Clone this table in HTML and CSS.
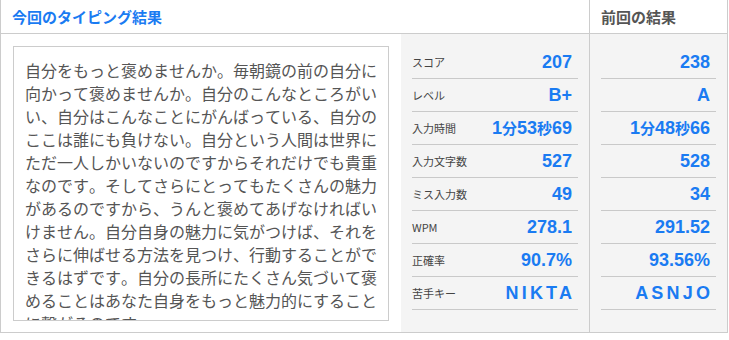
FILE: index.html
```html
<!DOCTYPE html>
<html lang="ja">
<head>
<meta charset="utf-8">
<title>タイピング結果</title>
<link rel="stylesheet" href="styles.css">
</head>
<body>
<div class="board">
  <div class="head head-cur">今回のタイピング結果</div>
  <div class="head head-prev">前回の結果</div>
  <div class="body-cur">
    <div class="passage">自分をもっと褒めませんか。毎朝鏡の前の自分に向かって褒めませんか。自分のこんなところがいい、自分はこんなことにがんばっている、自分のここは誰にも負けない。自分という人間は世界にただ一人しかいないのですからそれだけでも貴重なのです。そしてさらにとってもたくさんの魅力があるのですから、うんと褒めてあげなければいけません。自分自身の魅力に気がつけば、それをさらに伸ばせる方法を見つけ、行動することができるはずです。自分の長所にたくさん気づいて褒めることはあなた自身をもっと魅力的にすることに繋がるのです。</div>
    <div class="stats">
      <div class="row"><span class="label">スコア</span><span class="val">207</span></div>
      <div class="row"><span class="label">レベル</span><span class="val">B+</span></div>
      <div class="row"><span class="label">入力時間</span><span class="val">1<span class="unit">分</span>53<span class="unit">秒</span>69</span></div>
      <div class="row"><span class="label">入力文字数</span><span class="val">527</span></div>
      <div class="row"><span class="label">ミス入力数</span><span class="val">49</span></div>
      <div class="row"><span class="label">WPM</span><span class="val">278.1</span></div>
      <div class="row"><span class="label">正確率</span><span class="val">90.7%</span></div>
      <div class="row"><span class="label">苦手キー</span><span class="val keys">NIKTA</span></div>
    </div>
  </div>
  <div class="body-prev">
    <div class="row"><span class="val">238</span></div>
    <div class="row"><span class="val">A</span></div>
    <div class="row"><span class="val">1<span class="unit">分</span>48<span class="unit">秒</span>66</span></div>
    <div class="row"><span class="val">528</span></div>
    <div class="row"><span class="val">34</span></div>
    <div class="row"><span class="val">291.52</span></div>
    <div class="row"><span class="val">93.56%</span></div>
    <div class="row"><span class="val keys">ASNJO</span></div>
  </div>
</div>
</body>
</html>
```
FILE: styles.css
```css
* { box-sizing: border-box; }
html, body { margin: 0; padding: 0; background: #fff; }
body { font-family: "Noto Sans CJK JP", "Liberation Sans", sans-serif; }

.board {
  display: grid;
  grid-template-columns: 588px 138px;
  grid-template-rows: 34px 298px;
  width: 728px;
  border-left: 1px solid #cccccc;
  border-right: 1px solid #cccccc;
  border-bottom: 1px solid #cccccc;
}

.head {
  display: flex;
  align-items: center;
  padding: 0 11px 1px 11px;
  border-bottom: 1px solid #cccccc;
  font-size: 15px;
  font-weight: bold;
  line-height: 1;
}
.head-cur { color: #1a7bf2; }
.head-prev { color: #555555; border-left: 1px solid #cccccc; }

.body-cur {
  display: flex;
}

.passage {
  width: 376px;
  flex: none;
  margin: 12px 12px 11px 12px;
  border: 1px solid #cccccc;
  background: #fff;
  padding: 12px 10.5px 0 11px;
  font-size: 16px;
  line-height: 23px;
  color: #555555;
  overflow: hidden;
  line-break: anywhere;
  font-kerning: none;
  font-feature-settings: "kern" 0, "palt" 0;
  text-spacing-trim: space-all;
}

.stats {
  flex: 1;
  background: #f4f4f4;
  padding: 12px 11px 0 11px;
}

.body-prev {
  background: #f4f4f4;
  border-left: 1px solid #cccccc;
  padding: 12px 11px 0 11px;
}

.row {
  height: 33px;
  display: flex;
  align-items: center;
  justify-content: space-between;
  border-bottom: 1px solid #c9c9c9;
  padding-right: 6px;
}
.body-prev .row { justify-content: flex-end; }

.label {
  font-size: 11px;
  color: #444444;
  font-family: "Noto Sans CJK JP", "Liberation Sans", sans-serif;
}

.val {
  font-family: "Liberation Sans", "Noto Sans CJK JP", sans-serif;
  font-weight: bold;
  font-size: 18px;
  color: #1a7bf2;
  line-height: 1;
}

.unit {
  font-family: "Noto Sans CJK JP", sans-serif;
  font-size: 15px;
}

.keys {
  letter-spacing: 3.2px;
  margin-right: -3.2px;
}
```
